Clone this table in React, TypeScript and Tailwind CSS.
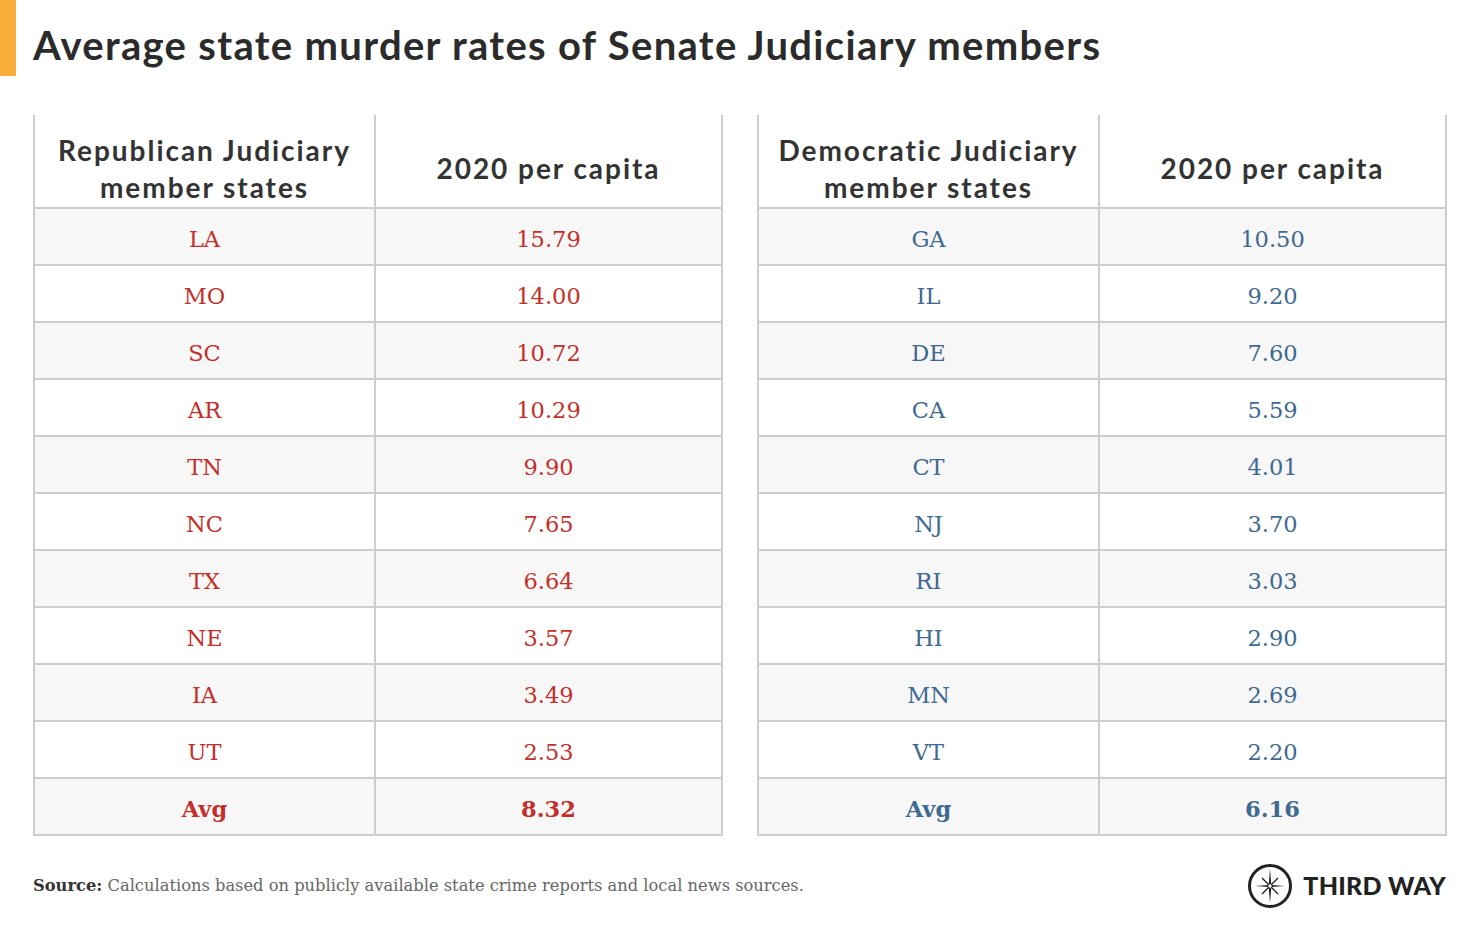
import React from "react";

const rep: [string, string][] = [
  ["LA", "15.79"],
  ["MO", "14.00"],
  ["SC", "10.72"],
  ["AR", "10.29"],
  ["TN", "9.90"],
  ["NC", "7.65"],
  ["TX", "6.64"],
  ["NE", "3.57"],
  ["IA", "3.49"],
  ["UT", "2.53"],
];
const dem: [string, string][] = [
  ["GA", "10.50"],
  ["IL", "9.20"],
  ["DE", "7.60"],
  ["CA", "5.59"],
  ["CT", "4.01"],
  ["NJ", "3.70"],
  ["RI", "3.03"],
  ["HI", "2.90"],
  ["MN", "2.69"],
  ["VT", "2.20"],
];

function Table({
  title,
  rows,
  avg,
  color,
}: {
  title: string;
  rows: [string, string][];
  avg: string;
  color: "red" | "blue";
}) {
  const tc = color === "red" ? "text-[#c3302b]" : "text-[#3e6990]";
  return (
    <div className="w-[690px] border-x-2 border-b-2 border-[#cdcdcd]">
      <div className="flex h-[92px] text-[28px] font-bold leading-[37px] tracking-[0.07em] text-[#333333] [font-family:Lato,sans-serif]">
        <div className="flex w-[341px] items-center justify-center border-r-2 border-[#cdcdcd] pt-[16px] text-center">
          <div>
            {title} Judiciary
            <br />
            member states
          </div>
        </div>
        <div className="flex flex-1 items-center justify-center pt-[14px]">2020 per capita</div>
      </div>
      {rows.map(([s, v], i) => (
        <div
          key={s}
          className={`flex h-[57px] border-t-2 border-[#cdcdcd] pt-[6px] text-[22.5px] ${tc} [font-family:'DejaVu_Serif',serif] ${
            i % 2 === 0 ? "bg-[#f7f7f7]" : "bg-white"
          }`}
        >
          <div className="-mt-[6px] flex w-[341px] items-center justify-center border-r-2 border-[#cdcdcd] pt-[6px]">{s}</div>
          <div className="flex flex-1 items-center justify-center">{v}</div>
        </div>
      ))}
      <div
        className={`flex h-[57px] border-t-2 border-[#cdcdcd] bg-[#f7f7f7] pt-[6px] text-[22.5px] font-bold ${tc} [font-family:'DejaVu_Serif',serif]`}
      >
        <div className="-mt-[6px] flex w-[341px] items-center justify-center border-r-2 border-[#cdcdcd] pt-[6px]">Avg</div>
        <div className="flex flex-1 items-center justify-center">{avg}</div>
      </div>
    </div>
  );
}

function Logo() {
  return (
    <div className="flex items-center gap-[10px]">
      <svg width="46" height="46" viewBox="0 0 46 46">
        <circle cx="23" cy="23" r="20.5" fill="none" stroke="#222" strokeWidth="3" />
        <path d="M23 6 L24.3 21.7 L23 23 L21.7 21.7 Z" fill="#222" />
        <path d="M23 40 L24.3 24.3 L23 23 L21.7 24.3 Z" fill="#222" />
        <path d="M8 23 L21.7 21.9 L23 23 L21.7 24.1 Z" fill="#222" />
        <path d="M38 23 L24.3 21.9 L23 23 L24.3 24.1 Z" fill="#222" />
        <path d="M15 15 L22 22 M31 15 L24 22 M15 31 L22 24 M31 31 L24 24" stroke="#222" strokeWidth="1.4" />
        <circle cx="23" cy="23" r="2.2" fill="#fff" stroke="#222" strokeWidth="1" />
      </svg>
      <span className="text-[25px] font-black tracking-[0.01em] text-[#222] [font-family:Lato,sans-serif]">THIRD WAY</span>
    </div>
  );
}

export default function App() {
  return (
    <div className="relative h-[929px] w-[1480px] overflow-hidden bg-white">
      <div className="absolute left-0 top-0 h-[76px] w-[16px] bg-[#fbad3c]" />
      <div className="pl-[33px] pt-[21px]">
        <h1 className="text-[40px] font-bold leading-[48px] tracking-[0.033em] text-[#2b2b2b] [font-family:Lato,sans-serif]">
          Average state murder rates of Senate Judiciary members
        </h1>
      </div>
      <div className="mt-[46px] flex gap-[34px] pl-[33px]">
        <Table title="Republican" rows={rep} avg="8.32" color="red" />
        <Table title="Democratic" rows={dem} avg="6.16" color="blue" />
      </div>
      <div className="mt-[27px] flex items-center justify-between pl-[33px] pr-[34px]">
        <div className="text-[16.3px] text-[#666] [font-family:'DejaVu_Serif',serif]">
          <span className="font-bold text-[#333]">Source:</span> Calculations based on publicly available state crime
          reports and local news sources.
        </div>
        <Logo />
      </div>
    </div>
  );
}
